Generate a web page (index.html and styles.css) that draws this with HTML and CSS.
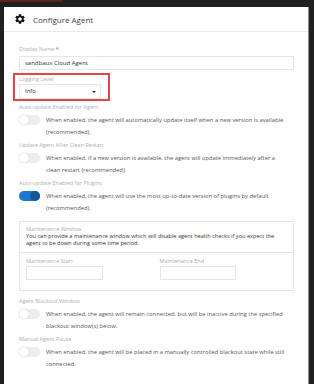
FILE: index.html
```html
<!DOCTYPE html>
<html lang="en">
<head>
    <meta charset="UTF-8">
    <meta name="viewport" content="width=device-width, initial-scale=1.0">
    <title>Configure Agent</title>
    <link rel="stylesheet" href="styles.css">
</head>
<body>
    <div class="backdrop">
        <div class="behind-tab"></div>

        <div class="modal">
            <div class="modal-header">
                <svg class="gear" viewBox="0 0 24 24" aria-hidden="true">
                    <path d="M19.14,12.94c0.04-0.3,0.06-0.61,0.06-0.94c0-0.32-0.02-0.64-0.07-0.94l2.03-1.58c0.18-0.14,0.23-0.41,0.12-0.61l-1.92-3.32c-0.12-0.22-0.37-0.29-0.59-0.22l-2.39,0.96c-0.5-0.38-1.03-0.7-1.62-0.94L14.4,2.81c-0.04-0.24-0.24-0.41-0.48-0.41h-3.84c-0.24,0-0.43,0.17-0.47,0.41L9.25,5.35C8.66,5.59,8.12,5.92,7.63,6.29L5.24,5.33c-0.22-0.08-0.47,0-0.59,0.22L2.74,8.87C2.62,9.08,2.66,9.34,2.86,9.48l2.03,1.58C4.84,11.36,4.8,11.69,4.8,12s0.02,0.64,0.07,0.94l-2.03,1.58c-0.18,0.14-0.23,0.41-0.12,0.61l1.92,3.32c0.12,0.22,0.37,0.29,0.59,0.22l2.39-0.96c0.5,0.38,1.03,0.7,1.62,0.94l0.36,2.54c0.05,0.24,0.24,0.41,0.48,0.41h3.84c0.24,0,0.44-0.17,0.47-0.41l0.36-2.54c0.59-0.24,1.13-0.56,1.62-0.94l2.39,0.96c0.22,0.08,0.47,0,0.59-0.22l1.92-3.32c0.12-0.22,0.07-0.47-0.12-0.61L19.14,12.94z M12,15.6c-1.98,0-3.6-1.62-3.6-3.6s1.62-3.6,3.6-3.6s3.6,1.62,3.6,3.6S13.98,15.6,12,15.6z"/>
                </svg>
                <h2>Configure Agent</h2>
            </div>

            <div class="modal-body">
                <div class="field">
                    <label for="displayName">Display Name <span class="req">*</span></label>
                    <input type="text" id="displayName" class="text-input" value="sandbaux Cloud Agent">
                </div>

                <div class="highlight">
                    <label>Logging Level</label>
                    <div class="select">Info <span class="caret"></span></div>
                </div>

                <div class="toggle-field">
                    <div class="field-label">Auto-update Enabled for Agent</div>
                    <div class="toggle-row">
                        <span class="toggle"></span>
                        <p>When enabled, the agent will automatically update itself when a new version is available (recommended).</p>
                    </div>
                </div>

                <div class="toggle-field">
                    <div class="field-label">Update Agent After Clean Restart</div>
                    <div class="toggle-row">
                        <span class="toggle"></span>
                        <p>When enabled, if a new version is available, the agent will update immediately after a clean restart (recommended).</p>
                    </div>
                </div>

                <div class="toggle-field">
                    <div class="field-label">Auto-update Enabled for Plugins</div>
                    <div class="toggle-row">
                        <span class="toggle on"></span>
                        <p>When enabled, the agent will use the most up-to-date version of plugins by default (recommended).</p>
                    </div>
                </div>

                <div class="maint">
                    <div class="maint-top">
                        <div class="field-label">Maintenance Window</div>
                        <p>You can provide a maintenance window which will disable agent health checks if you expect the agent to be down during some time period.</p>
                    </div>
                    <div class="maint-times">
                        <div>
                            <div class="field-label">Maintenance Start</div>
                            <div class="time-input"></div>
                        </div>
                        <div>
                            <div class="field-label">Maintenance End</div>
                            <div class="time-input"></div>
                        </div>
                    </div>
                </div>

                <div class="toggle-field after-box">
                    <div class="field-label">Agent Blackout Window</div>
                    <div class="toggle-row">
                        <span class="toggle"></span>
                        <p>When enabled, the agent will remain connected, but will be inactive during the specified blackout window(s) below.</p>
                    </div>
                </div>

                <div class="toggle-field">
                    <div class="field-label">Manual Agent Pause</div>
                    <div class="toggle-row">
                        <span class="toggle"></span>
                        <p>When enabled, the agent will be placed in a manually controlled blackout state while still connected.</p>
                    </div>
                </div>
            </div>
        </div>
    </div>
</body>
</html>
```

FILE: styles.css
```css
:root {
    --dark-bg: #202020;
    --label-color: #b0b0b0;
    --text-color: #555;
    --border-color: #e6e6e6;
    --accent: #1b78d0;
    --highlight: #e0454a;
}

* {
    margin: 0;
    padding: 0;
    box-sizing: border-box;
}

html, body {
    height: 100%;
    overflow: hidden;
}

body {
    font-family: 'Open Sans', 'DejaVu Sans', sans-serif;
    background-color: var(--dark-bg);
    color: var(--text-color);
}

.backdrop {
    height: 100%;
    padding: 0 6px 0 4px;
}

.behind-tab {
    width: 62px;
    height: 2px;
    background-color: #5a2418;
    margin-left: -4px;
    margin-bottom: 5px;
}

.modal {
    background-color: white;
    height: calc(100% - 7px);
    overflow: hidden;
    box-shadow: 1px 0 0 #8a8a8a;
}

.modal-header {
    height: 25px;
    display: flex;
    align-items: center;
    gap: 7px;
    padding-left: 10px;
    border-bottom: 1px solid #ececec;
}

.gear {
    width: 12px;
    height: 12px;
    fill: #111;
}

.modal-header h2 {
    font-size: 8px;
    font-weight: normal;
    color: #444;
}

.modal-body {
    padding: 13px 14px 0 15px;
}

label,
.field-label {
    display: block;
    font-size: 5.5px;
    line-height: 9px;
    color: var(--label-color);
}

.req {
    color: var(--highlight);
}

.text-input {
    display: block;
    width: 100%;
    height: 14px;
    margin-top: 2px;
    padding: 0 5px;
    border: 1px solid var(--border-color);
    font-family: inherit;
    font-size: 6px;
    color: #333;
}

.highlight {
    width: 97px;
    margin: 3px 0 2px -6px;
    padding: 0 0 0 4px;
    border: 2px solid var(--highlight);
}

.select {
    position: relative;
    width: 82px;
    height: 15px;
    border: 1px solid var(--border-color);
    padding-left: 5px;
    font-size: 6px;
    line-height: 13px;
    color: #333;
}

.caret {
    position: absolute;
    right: 4px;
    top: 6px;
    border-left: 2px solid transparent;
    border-right: 2px solid transparent;
    border-top: 2px solid #222;
}

.toggle-field {
    margin-bottom: 3px;
}

.toggle-field .field-label {
    margin-bottom: 2px;
}

.toggle-row {
    display: flex;
    gap: 6px;
    padding-right: 6px;
}

.toggle-row p {
    font-size: 5.8px;
    line-height: 12px;
}

.toggle {
    position: relative;
    flex: none;
    width: 21px;
    height: 10px;
    margin-top: 1px;
    border-radius: 5px;
    background-color: #ededed;
}

.toggle::after {
    content: '';
    position: absolute;
    left: 0;
    top: 0;
    width: 10px;
    height: 10px;
    border-radius: 50%;
    background-color: white;
    box-shadow: 0 0 1px rgba(0,0,0,0.35);
}

.toggle.on {
    background-color: var(--accent);
}

.toggle.on::after {
    left: 11px;
    background-color: #13569a;
    box-shadow: none;
}

.maint {
    margin-top: 7px;
    border: 1px solid var(--border-color);
}

.maint-top {
    padding: 3px 6px 5px;
    border-bottom: 1px solid var(--border-color);
}

.maint-top .field-label {
    line-height: 8px;
}

.maint-top p {
    font-size: 5.6px;
    line-height: 7px;
    color: #333;
}

.maint-times {
    display: grid;
    grid-template-columns: 1fr 1fr;
    gap: 6px;
    padding: 4px 6px 10px;
}

.maint-times .field-label {
    line-height: 8px;
    margin-bottom: 1px;
}

.time-input {
    width: 60%;
    height: 14px;
    border: 1px solid var(--border-color);
}

.after-box {
    margin-top: 6px;
}
```
